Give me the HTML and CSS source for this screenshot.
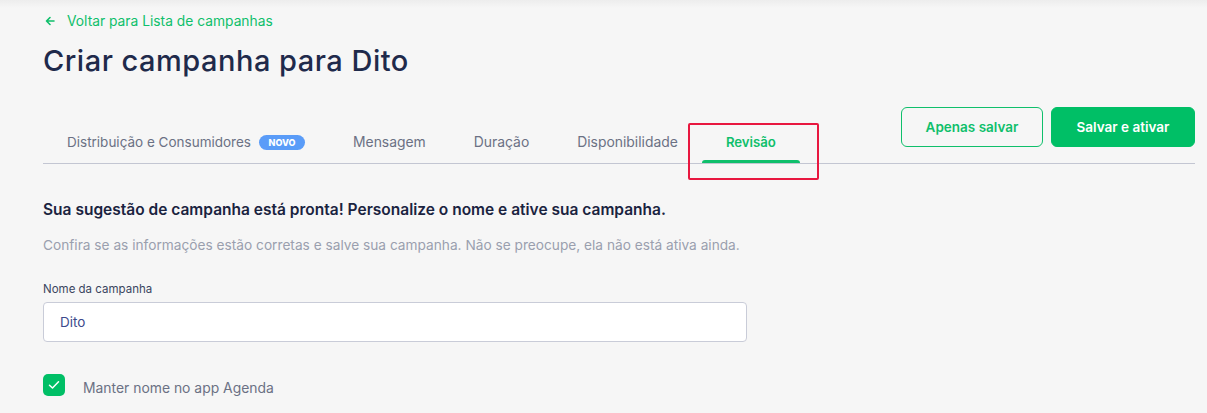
FILE: index.html
```html
<!DOCTYPE html>
<html lang="pt-BR">
<head>
<meta charset="utf-8">
<title>Criar campanha para Dito</title>
<link rel="stylesheet" href="styles.css">
</head>
<body>
<div class="page">
  <a class="back" href="#">
    <svg class="back-icon" width="10" height="10" viewBox="0 0 10 10" aria-hidden="true">
      <path d="M9 5H1.5M5 1.5L1.5 5L5 8.5" fill="none" stroke="currentColor" stroke-width="1.6" stroke-linecap="round" stroke-linejoin="round"/>
    </svg>
    <span>Voltar para Lista de campanhas</span>
  </a>
  <h1 class="title">Criar campanha para Dito</h1>

  <div class="tabbar">
    <nav class="tabs">
      <div class="tab">Distribuição e Consumidores <span class="badge">NOVO</span></div>
      <div class="tab">Mensagem</div>
      <div class="tab">Duração</div>
      <div class="tab">Disponibilidade</div>
      <div class="tab tab-active">Revisão<span class="highlight"></span></div>
    </nav>
    <div class="actions">
      <button class="btn btn-outline">Apenas salvar</button>
      <button class="btn btn-primary">Salvar e ativar</button>
    </div>
  </div>

  <section class="content">
    <h2 class="heading">Sua sugestão de campanha está pronta! Personalize o nome e ative sua campanha.</h2>
    <p class="sub">Confira se as informações estão corretas e salve sua campanha. Não se preocupe, ela não está ativa ainda.</p>
    <label class="label">Nome da campanha</label>
    <div class="input">Dito</div>
    <div class="check-row">
      <span class="checkbox">
        <svg width="12" height="10" viewBox="0 0 12 10" aria-hidden="true">
          <path d="M1.5 5.2L4.5 8L10.5 1.8" fill="none" stroke="#fff" stroke-width="1.5" stroke-linecap="round" stroke-linejoin="round"/>
        </svg>
      </span>
      <span class="check-label">Manter nome no app Agenda</span>
    </div>
  </section>
</div>
</body>
</html>
```

FILE: styles.css
```css
* { box-sizing: border-box; }
html, body {
  margin: 0;
  padding: 0;
  height: 100%;
}
body {
  background: linear-gradient(#ededed 0, #f6f6f6 8px, #f6f6f6 100%);
  font-family: Inter, "Noto Sans", sans-serif;
  color: #1f2a4b;
  overflow: hidden;
}
.page {
  padding: 12px 12px 0 43px;
}
.back {
  display: flex;
  align-items: center;
  height: 18px;
  color: #0fbf6b;
  text-decoration: none;
  font-size: 13.8px;
}
.back-icon {
  margin-left: 2px;
  margin-right: 12px;
}
.title {
  margin: 13px 0 0;
  font-size: 29px;
  line-height: 36px;
  font-weight: 500;
  color: #1f2a4b;
  letter-spacing: 0.5px;
}
.tabbar {
  margin-top: 28px;
  display: flex;
  align-items: flex-end;
  justify-content: space-between;
  border-bottom: 1px solid #c3c6d2;
}
.tabs {
  display: flex;
}
.tab {
  position: relative;
  height: 44px;
  padding: 2px 24px 0;
  display: flex;
  align-items: center;
  font-size: 13.9px;
  color: #6b7184;
  white-space: nowrap;
}
.tab:first-child {
  font-size: 13.5px;
}
.tab-active {
  color: #0fbf6b;
  font-weight: 600;
  font-size: 13.2px;
}
.tab-active::after {
  content: "";
  position: absolute;
  left: 0;
  right: 0;
  bottom: 0;
  height: 3px;
  border-radius: 3px 3px 0 0;
  background: #0fbf6b;
}
.highlight {
  position: absolute;
  left: -14px;
  top: 4px;
  width: 131px;
  height: 57px;
  border: 2px solid #e8173f;
  border-radius: 2px;
}
.badge {
  margin-left: 8px;
  width: 46px;
  height: 15px;
  border-radius: 8px;
  background: #5a9cf8;
  color: #fff;
  font-size: 9px;
  font-weight: 800;
  line-height: 15px;
  text-align: center;
}
.actions {
  display: flex;
  gap: 8px;
  margin-bottom: 16px;
}
.btn {
  height: 40px;
  border-radius: 6px;
  font-family: inherit;
  font-size: 13.5px;
  font-weight: 600;
  cursor: pointer;
}
.btn-outline {
  width: 142px;
  background: transparent;
  border: 1px solid #0fbf6b;
  color: #0fbf6b;
}
.btn-primary {
  width: 144px;
  background: #00bf66;
  border: 1px solid #00bf66;
  color: #fff;
}
.content {
  padding-top: 36px;
}
.heading {
  margin: 0;
  font-size: 15.5px;
  line-height: 20px;
  font-weight: 600;
  color: #1a2340;
}
.sub {
  margin: 16px 0 0;
  font-size: 13.7px;
  line-height: 18px;
  color: #9a9fae;
}
.label {
  display: block;
  margin-top: 27px;
  font-size: 11.5px;
  line-height: 16px;
  color: #3a4560;
}
.input {
  margin-top: 5px;
  width: 704px;
  height: 40px;
  border: 1px solid #c9ccd8;
  border-radius: 4px;
  background: #fff;
  padding: 0 16px;
  display: flex;
  align-items: center;
  font-size: 13.5px;
  color: #3c4a8c;
}
.check-row {
  margin-top: 32px;
  display: flex;
  align-items: center;
}
.checkbox {
  width: 22px;
  height: 22px;
  border-radius: 5px;
  background: #00bf66;
  display: flex;
  align-items: center;
  justify-content: center;
}
.check-label {
  margin-left: 18px;
  padding-top: 6px;
  font-size: 13.9px;
  color: #6b7184;
}
```
